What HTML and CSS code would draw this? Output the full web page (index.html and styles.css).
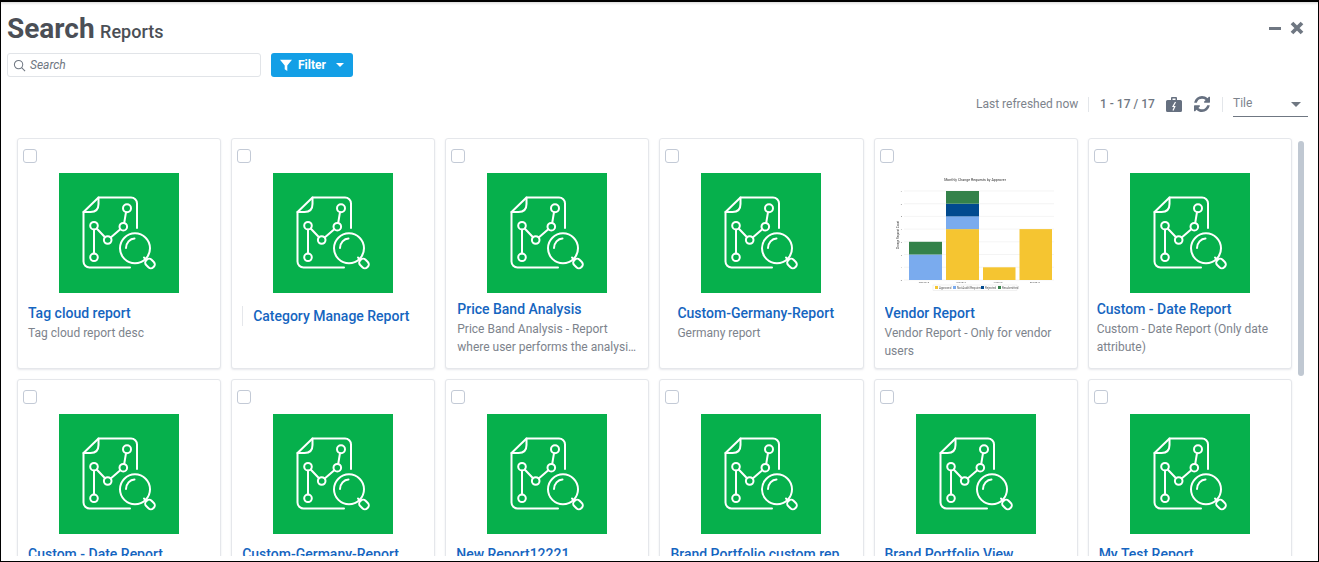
FILE: index.html
```html
<!DOCTYPE html>
<html lang="en">
<head>
<meta charset="utf-8">
<title>Search Reports</title>
<link rel="stylesheet" href="styles.css">
</head>
<body>
<svg class="defs" width="0" height="0" aria-hidden="true">
  <symbol id="report" viewBox="0 0 120 120">
    <g fill="none" stroke="#fff" stroke-width="2" stroke-linecap="round" stroke-linejoin="round">
      <path d="M78 55V30.500a6 6 0 0 0-6-6H39.500L24.500 39V88.500a6 6 0 0 0 6 6H71"/>
      <path d="M39.500 24.500V31c0 5-3 8-8 8H24.500"/>
      <circle cx="68" cy="35.300" r="4"/>
      <circle cx="64.300" cy="53.700" r="3.800"/>
      <circle cx="48.700" cy="67" r="3.800"/>
      <circle cx="35" cy="52.700" r="3.800"/>
      <circle cx="35" cy="84.300" r="3.800"/>
      <path d="M67 39.200L65.200 50M61.300 56.200L51.700 64.500M46 64.200L37.700 55.500M35 56.500V80.500"/>
      <circle cx="76" cy="75.300" r="15"/>
      <path d="M67 75c0-5 4-9.500 8.500-9.500"/>
      <rect x="-5" y="-3.800" width="10" height="7.600" rx="3.400" transform="translate(91 90.500) rotate(45)"/>
      <path d="M86.500 86l-1.500-1.500"/>
    </g>
  </symbol>
</svg>
<main class="window">
  <header class="head">
    <h1 class="title">Search <small class="subtitle">Reports</small></h1>
    <div class="win-actions">
      <span class="minimize"></span>
      <svg class="close" viewBox="0 0 14 14"><path d="M2 2l10 10M12 2L2 12"/></svg>
    </div>
  </header>
  <div class="searchbar">
    <label class="search">
      <svg class="search-icon" viewBox="0 0 14 14"><circle cx="6" cy="6" r="4.500"/><path d="M9.300 9.300L13 13"/></svg>
      <span class="placeholder">Search</span>
    </label>
    <button class="filter">
      <svg class="filter-icon" viewBox="0 0 14 14"><path d="M0 1h14L8.500 7.500V14L5.500 12V7.500z"/></svg>
      <span>Filter</span>
      <i class="caret"></i>
    </button>
  </div>
  <div class="toolbar">
    <span class="refreshed">Last refreshed now</span>
    <i class="sep first"></i>
    <span class="count">1 - 17 / 17</span>
    <svg class="bag" viewBox="0 0 16 15"><path d="M5 3V1a1 1 0 0 1 1-1h4a1 1 0 0 1 1 1v2h3.500A1.500 1.500 0 0 1 16 4.500v9a1.500 1.500 0 0 1-1.500 1.500h-13A1.500 1.500 0 0 1 0 13.500v-9A1.500 1.500 0 0 1 1.500 3zM6.500 3h3V1.500h-3z" fill-rule="evenodd"/><path class="bag-mark" d="M9.500 5L7 9.500h1.800L7 13.500"/></svg>
    <svg class="sync" viewBox="128 128 1536 1536"><path d="M1639 1056q0 5-1 7-64 268-268 434.500t-478 166.500q-146 0-282.500-55t-243.500-157l-129 129q-19 19-45 19t-45-19-19-45v-448q0-26 19-45t45-19h448q26 0 45 19t19 45-19 45l-137 137q71 66 161 102t187 36q134 0 250-65t186-179q11-17 53-117 8-23 30-23h192q13 0 22.500 9.500t9.500 22.500zm25-800v448q0 26-19 45t-45 19h-448q-26 0-45-19t-19-45 19-45l138-138q-148-137-349-137-134 0-250 65t-186 179q-11 17-53 117-8 23-30 23h-199q-13 0-22.500-9.500t-9.500-22.500v-7q65-268 270-434.500t480-166.500q146 0 284 55.500t245 156.500l130-129q19-19 45-19t45 19 19 45z"/></svg>
    <i class="sep second"></i>
    <div class="view-select"><span>Tile</span><i class="caret dark"></i></div>
  </div>
  <section class="viewport">
    <div class="grid">
      <article class="card">
        <i class="check"></i>
        <svg class="thumb"><use href="#report"/></svg>
        <div class="body inset-11"><h2 class="name">Tag cloud report</h2><p class="desc">Tag cloud report desc</p></div>
      </article>
      <article class="card">
        <i class="check"></i>
        <svg class="thumb"><use href="#report"/></svg>
        <div class="body inset-11 lone"><h2 class="name">Category Manage Report</h2></div>
      </article>
      <article class="card">
        <i class="check"></i>
        <svg class="thumb"><use href="#report"/></svg>
        <div class="body inset-12 raised"><h2 class="name">Price Band Analysis</h2><p class="desc clamp">Price Band Analysis - Report where user performs the analysis of price bands</p></div>
      </article>
      <article class="card">
        <i class="check"></i>
        <svg class="thumb"><use href="#report"/></svg>
        <div class="body inset-18"><h2 class="name">Custom-Germany-Report</h2><p class="desc">Germany report</p></div>
      </article>
      <article class="card">
        <i class="check"></i>
        <svg class="thumb chart" viewBox="1 0 202 120">
          <text class="c-title" x="101" y="8">Monthly Change Requests by Approver</text>
          <g class="c-grid">
            <path d="M30 18H180M30 30.700H180M30 43.400H180M30 56.100H180M30 68.800H180M30 81.500H180M30 94.200H180M30 107H180"/>
          </g>
          <text class="c-num" x="28" y="19">7</text>
          <text class="c-num" x="28" y="31.700">6</text>
          <text class="c-num" x="28" y="44.400">5</text>
          <text class="c-num" x="28" y="57.100">4</text>
          <text class="c-num" x="28" y="69.800">3</text>
          <text class="c-num" x="28" y="82.500">2</text>
          <text class="c-num" x="28" y="95.200">1</text>
          <text class="c-num" x="28" y="108">0</text>
          <rect class="y" x="72" y="56.100" width="33" height="50.900"/>
          <rect class="b" x="72" y="43.400" width="33" height="12.700"/>
          <rect class="n" x="72" y="30.700" width="33" height="12.700"/>
          <rect class="g" x="72" y="18" width="33" height="12.700"/>
          <rect class="b" x="35" y="81.500" width="33" height="25.500"/>
          <rect class="g" x="35" y="68.800" width="33" height="12.700"/>
          <rect class="y" x="109" y="94.300" width="32.500" height="12.700"/>
          <rect class="y" x="145.500" y="56.100" width="32.500" height="50.900"/>
          <text class="c-tick" x="50" y="110">May2015</text>
          <text class="c-tick" x="87" y="110">Jun2015</text>
          <text class="c-tick" x="124" y="110">Jul2015</text>
          <text class="c-tick" x="161" y="110">Aug2015</text>
          <text class="c-axis" transform="translate(25 62) rotate(-90)">Change Request Count</text>
          <rect class="c-legend" x="59" y="112" width="84" height="5.500"/>
          <rect class="y" x="61" y="113" width="3" height="3"/><text class="c-leg" x="65" y="116">Approved</text>
          <rect class="b" x="79" y="113" width="3" height="3"/><text class="c-leg" x="83" y="116">Not Audit/Required</text>
          <rect class="n" x="107" y="113" width="3" height="3"/><text class="c-leg" x="111" y="116">Rejected</text>
          <rect class="g" x="124" y="113" width="3" height="3"/><text class="c-leg" x="128" y="116">Resubmitted</text>
        </svg>
        <div class="body inset-11"><h2 class="name">Vendor Report</h2><p class="desc">Vendor Report - Only for vendor users</p></div>
      </article>
      <article class="card">
        <i class="check"></i>
        <svg class="thumb"><use href="#report"/></svg>
        <div class="body inset-9 raised"><h2 class="name">Custom - Date Report</h2><p class="desc">Custom - Date Report (Only date attribute)</p></div>
      </article>

      <article class="card">
        <i class="check"></i>
        <svg class="thumb"><use href="#report"/></svg>
        <div class="body inset-11"><h2 class="name">Custom - Date Report</h2></div>
      </article>
      <article class="card">
        <i class="check"></i>
        <svg class="thumb"><use href="#report"/></svg>
        <div class="body inset-11"><h2 class="name">Custom-Germany-Report</h2></div>
      </article>
      <article class="card">
        <i class="check"></i>
        <svg class="thumb"><use href="#report"/></svg>
        <div class="body inset-11"><h2 class="name">New Report12221</h2></div>
      </article>
      <article class="card">
        <i class="check"></i>
        <svg class="thumb"><use href="#report"/></svg>
        <div class="body inset-11"><h2 class="name">Brand Portfolio custom report</h2></div>
      </article>
      <article class="card">
        <i class="check"></i>
        <svg class="thumb"><use href="#report"/></svg>
        <div class="body inset-11"><h2 class="name">Brand Portfolio View</h2></div>
      </article>
      <article class="card">
        <i class="check"></i>
        <svg class="thumb"><use href="#report"/></svg>
        <div class="body inset-11"><h2 class="name">My Test Report</h2></div>
      </article>
    </div>
    <div class="scroll-thumb"></div>
  </section>
</main>
</body>
</html>
```

FILE: styles.css
```css
* { box-sizing: border-box; }
html, body { margin: 0; padding: 0; height: 100%; overflow: hidden; background: #fff; }
body { font-family: Roboto, "Liberation Sans", sans-serif; color: #4b4f56; }
.defs { position: absolute; }

.window {
  width: 1319px;
  height: 562px;
  border-top: 2px solid #000;
  border-left: 1px solid #000;
  border-right: 1px solid #000;
  border-bottom: 1px solid #000;
  display: flex;
  flex-direction: column;
  overflow: hidden;
  box-shadow: inset 0 3px 3px -2px rgba(0,0,0,.18);
}

.head { display: flex; justify-content: space-between; align-items: flex-start; height: 51px; padding: 10px 14px 0 6px; }
.title { margin: 0; font-size: 28px; line-height: 34px; font-weight: 700; color: #4b4f56; word-spacing: -1.500px; }
.subtitle { font-size: 18px; font-weight: 500; word-spacing: 0; }
.win-actions { display: flex; align-items: center; gap: 9px; padding-top: 9px; }
.minimize { width: 12px; height: 3px; background: #6f7782; }
.close { width: 14px; height: 14px; fill: none; stroke: #6f7782; stroke-width: 3.800; }

.searchbar { display: flex; align-items: center; gap: 10px; padding-left: 6px; height: 24px; }
.search {
  width: 254px; height: 24px; border: 1px solid #e1e4e8; border-radius: 3px;
  display: flex; align-items: center; gap: 4px; padding-left: 5px;
}
.search-icon { width: 13px; height: 13px; fill: none; stroke: #6f7782; stroke-width: 1.100; }
.placeholder { font-size: 12px; font-style: italic; color: #6f7782; }
.filter {
  width: 82px; height: 24px; border: 0; border-radius: 3px; background: #139fe6; color: #fff;
  display: flex; align-items: center; padding: 0 0 0 9px;
  font: 700 12px Roboto, sans-serif;
}
.filter-icon { width: 12px; height: 12px; fill: #fff; margin-right: 6px; }
.caret { width: 0; height: 0; border: 4px solid transparent; border-top: 4px solid #fff; border-bottom: 0; margin-left: 10px; }
.caret.dark { border-top-color: #6f7782; border-width: 5px 5px 0; margin: 0; }

.toolbar { display: flex; align-items: center; height: 24px; margin-top: 15px; padding-left: 975px; font-size: 12px; color: #7d838c; }
.refreshed { width: 103px; white-space: nowrap; }
.sep { width: 1px; height: 15px; background: #e3e6ea; }
.sep.first { margin: 0 11px 0 9px; }
.sep.second { margin: 0 10px 0 12px; }
.count { font-weight: 500; color: #6f7782; white-space: nowrap; width: 55px; }
.bag { width: 16px; height: 15px; fill: #667080; margin-left: 11px; }
.bag-mark { fill: none; stroke: #fff; stroke-width: 1.200; }
.sync { width: 16px; height: 16px; margin-left: 12px; fill: #667080; }
.view-select {
  width: 75px; height: 24px; margin-top: 2px; border-bottom: 1px solid #6f7782;
  display: flex; justify-content: space-between; align-items: flex-start;
  padding: 3px 7px 0 0; line-height: 15px; color: #7d838c;
}
.view-select .caret { margin-top: 6px; }

.viewport { position: relative; flex: 1; min-height: 0; margin-top: 22px; overflow: hidden; margin-bottom: 5px; }
.grid { display: grid; grid-template-columns: repeat(6, 204.140px); gap: 10px; padding-left: 16px; }
.card {
  height: 231px; background: #fff; border: 1px solid #e5e7eb; border-radius: 3px;
  box-shadow: 0 1px 2px rgba(120,130,150,.18);
  position: relative; display: flex; flex-direction: column; align-items: center; padding-top: 34px;
}
.check {
  position: absolute; left: 5px; top: 10px; width: 14px; height: 14px;
  border: 1px solid #c3cad6; border-radius: 3px; background: #fff;
}
.thumb { width: 120px; height: 120px; background: #06b04c; flex: none; display: block; }
.thumb.chart { width: 202px; background: #fff; filter: blur(.35px); }
.thumb.chart .y { fill: #f5c531; }
.thumb.chart .b { fill: #7aabee; }
.thumb.chart .n { fill: #014a8f; }
.thumb.chart .g { fill: #34824a; }
.c-grid path { stroke: #ececec; stroke-width: .6; fill: none; }
.c-title { font-size: 3.600px; text-anchor: middle; fill: #333; }
.c-tick { font-size: 2.500px; text-anchor: middle; fill: #666; }
.c-num { font-size: 2.200px; text-anchor: end; fill: #666; }
.c-axis { font-size: 2.800px; text-anchor: middle; fill: #333; }
.c-leg { font-size: 2.900px; fill: #555; }
.c-legend { fill: #fff; stroke: #ddd; stroke-width: .4; }

.body { align-self: stretch; padding-top: 11px; }
.inset-9 { padding-left: 8px; }
.inset-11 { padding-left: 10px; }
.inset-12 { padding-left: 11px; }
.inset-18 { padding-left: 17px; }
.raised { padding-top: 7px; }
.lone { padding-left: 21px; position: relative; padding-top: 14px; }
.lone::before { content: ""; position: absolute; left: 10px; top: 13px; width: 1px; height: 20px; background: #e5e7eb; }
.name {
  margin: 0; font-size: 14px; line-height: 18px; font-weight: 500; color: #1565c0;
  white-space: nowrap; overflow: hidden; text-overflow: ellipsis; padding-right: 8px;
}
.desc { margin: 2px 0 0; font-size: 12px; line-height: 18px; color: #7d838c; padding-right: 8px; }
.clamp { display: -webkit-box; -webkit-box-orient: vertical; -webkit-line-clamp: 2; overflow: hidden; }

.scroll-thumb { position: absolute; left: 1297px; top: 3px; width: 6px; height: 235px; border-radius: 3px; background: #c0c8d2; }
```
